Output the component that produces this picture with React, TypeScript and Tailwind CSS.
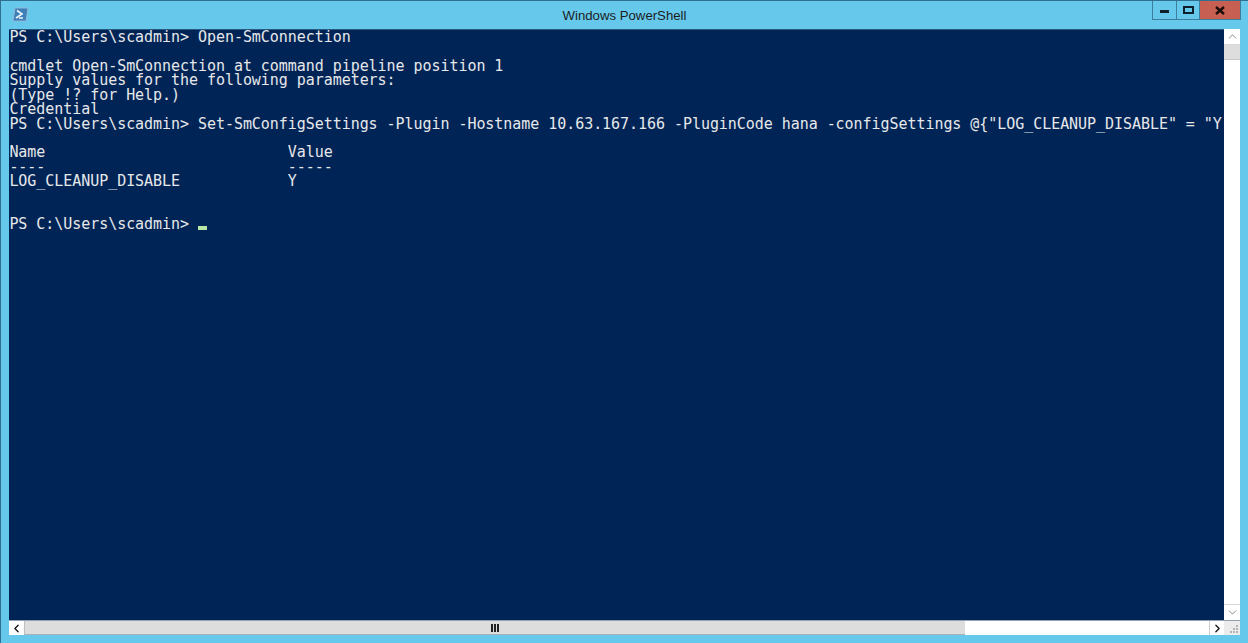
import { ChevronDown, ChevronLeft, ChevronRight, ChevronUp } from 'lucide-react';

const lines = [
  'PS C:\\Users\\scadmin> Open-SmConnection',
  '',
  'cmdlet Open-SmConnection at command pipeline position 1',
  'Supply values for the following parameters:',
  '(Type !? for Help.)',
  'Credential',
  'PS C:\\Users\\scadmin> Set-SmConfigSettings -Plugin -Hostname 10.63.167.166 -PluginCode hana -configSettings @{"LOG_CLEANUP_DISABLE" = "Y',
  '',
  'Name                           Value',
  '----                           -----',
  'LOG_CLEANUP_DISABLE            Y',
  '',
  '',
];

function PsIcon() {
  return (
    <svg width="17" height="15" viewBox="0 0 17 15" aria-hidden="true">
      <path d="M3 1h13l-2 13H1z" fill="#3f7fb8" stroke="#8fb8d8" strokeWidth="1" />
      <path d="M5 3.5l5 3.5-6 4M7 11h4" fill="none" stroke="#eef6fb" strokeWidth="1.6" />
    </svg>
  );
}

function Grip() {
  return (
    <svg width="12" height="12" viewBox="0 0 12 12" aria-hidden="true" fill="#b4b4b4">
      <rect x="9" y="2" width="2" height="2" />
      <rect x="6" y="5" width="2" height="2" />
      <rect x="9" y="5" width="2" height="2" />
      <rect x="3" y="8" width="2" height="2" />
      <rect x="6" y="8" width="2" height="2" />
      <rect x="9" y="8" width="2" height="2" />
    </svg>
  );
}

export default function App() {
  return (
    <div className="flex h-[643px] w-[1248px] flex-col overflow-hidden border-t border-l border-[#2f6f8f] bg-[#66c9ec] font-['Liberation_Sans',sans-serif]">
      {/* title bar */}
      <div className="flex h-[28px] shrink-0 items-start">
        <div className="flex w-[96px] pt-[6px] pl-[11px]">
          <PsIcon />
        </div>
        <div className="flex-1 pt-[6px] text-center text-[13.2px] leading-[17px] text-[#1c1c1c]">Windows PowerShell</div>
        <div className="mr-[7px] flex h-[19px] w-[89px] items-stretch">
          <div className="flex w-[25px] items-center justify-center border-r border-b border-l border-[#3b7f9c]">
            <div className="mt-[3px] h-[3px] w-[9px] bg-[#10202a]" />
          </div>
          <div className="flex w-[23px] items-center justify-center border-r border-b border-[#3b7f9c]">
            <div className="h-[8px] w-[11px] border-2 border-[#10202a]" />
          </div>
          <div className="flex w-[41px] items-center justify-center border-r border-b border-[#3b7f9c] bg-[#c75f52] text-[#1a0d0b]">
            <svg width="10" height="9" viewBox="0 0 10 9" aria-hidden="true">
              <path d="M1 1l8 7M9 1l-8 7" stroke="currentColor" strokeWidth="2.4" fill="none" />
            </svg>
          </div>
        </div>
      </div>

      {/* console + vertical scrollbar */}
      <div className="ml-[8px] flex h-[591px] w-[1231px] shrink-0">
        <div className="w-[1215px] shrink-0 overflow-hidden border-t border-[#2a5a80] bg-[#012456] pt-[0.2px] pl-[0.4px] font-['DejaVu_Sans_Mono',monospace] text-[15px] leading-[14.4px] tracking-[-0.05px] text-[#e6e8ea]">
          {lines.map((line, i) => (
            <div key={i} className="h-[14.4px] whitespace-pre">
              {line}
            </div>
          ))}
          <div className="flex h-[14.4px] items-center whitespace-pre">
            <span>{'PS C:\\Users\\scadmin> '}</span>
            <div className="mt-[8px] h-[4px] w-[9px] bg-[#b8e6a8]" />
          </div>
        </div>
        <div className="flex w-[16px] shrink-0 flex-col bg-white">
          <div className="flex h-[16px] items-center justify-center border-b border-[#d8d8d8] text-[#777777]">
            <ChevronUp size={13} strokeWidth={1.6} />
          </div>
          <div className="h-[15px] border-b border-[#c8c8c8] bg-[#dddddd]" />
          <div className="flex-1" />
          <div className="flex h-[16px] items-center justify-center border-t border-[#d8d8d8] text-[#777777]">
            <ChevronDown size={13} strokeWidth={1.6} />
          </div>
        </div>
      </div>

      {/* horizontal scrollbar */}
      <div className="ml-[8px] flex h-[15px] w-[1231px] shrink-0 border-t border-[#8fa3b5]">
        <div className="flex w-[15px] items-center justify-center bg-white text-[#111111]">
          <ChevronLeft size={13} strokeWidth={2.4} />
        </div>
        <div className="flex w-[941px] items-center justify-center gap-[1px] border-b border-l border-b-[#a8b0b8] border-l-[#c0c0c0] bg-[#dddddd]">
          <div className="h-[8px] w-[2px] bg-[#222222]" />
          <div className="h-[8px] w-[2px] bg-[#222222]" />
          <div className="h-[8px] w-[2px] bg-[#222222]" />
        </div>
        <div className="flex-1 bg-white" />
        <div className="flex w-[15px] items-center justify-center border-l border-[#d0d0d0] bg-white text-[#111111]">
          <ChevronRight size={13} strokeWidth={2.4} />
        </div>
        <div className="flex w-[16px] items-end justify-end bg-[#ececec] pr-[1px]">
          <Grip />
        </div>
      </div>
    </div>
  );
}
